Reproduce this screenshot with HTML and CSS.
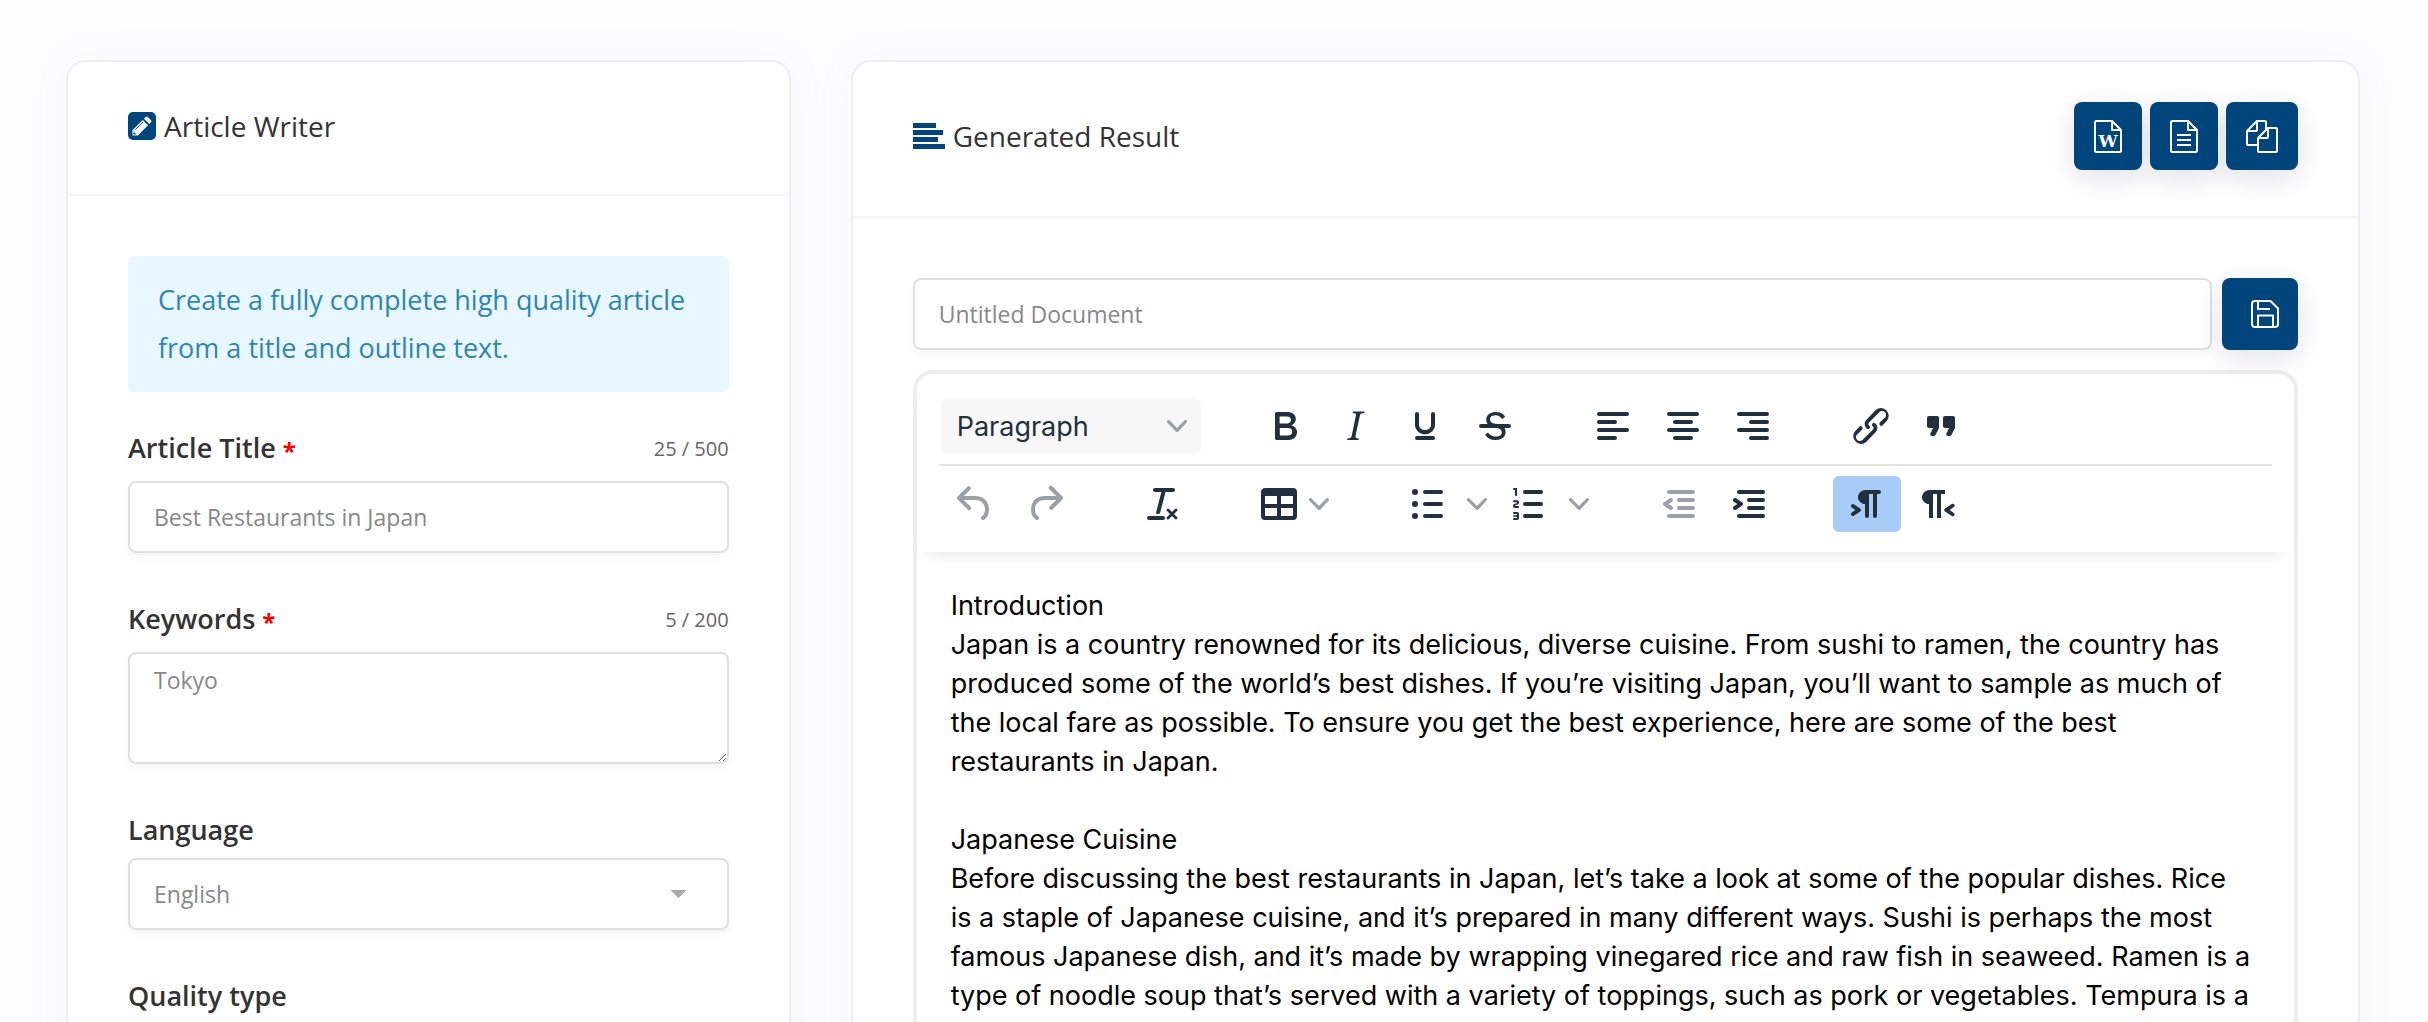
FILE: index.html
```html
<!DOCTYPE html>
<html lang="en">
<head>
    <meta charset="UTF-8">
    <meta name="viewport" content="width=device-width, initial-scale=1.0">
    <title>Article Writer</title>
    <link rel="stylesheet" href="styles.css">
</head>
<body>
<main class="page">
    <form class="card form-card">
        <header class="card-header">
            <svg class="icon-pen" viewBox="0 0 28 28" aria-hidden="true">
                <rect width="28" height="28" rx="5" fill="#00457b"/>
                <path d="M4.500 23.500V18.200L14.700 8l5.300 5.300L9.800 23.500z" fill="#fff"/>
                <path d="M16 6.700l1.600-1.600a1.600 1.600 0 0 1 2.300 0l3 3a1.600 1.600 0 0 1 0 2.300l-1.600 1.600z" fill="#fff"/>
                <path d="M7.500 17.500l7.500-7.500M6 20v2h2" fill="none" stroke="#00457b"/>
            </svg>
            <h1>Article Writer</h1>
        </header>
        <div class="card-body">
            <p class="notice">Create a fully complete high quality article from a title and outline text.</p>

            <div class="field">
                <div class="field-head">
                    <label for="title">Article Title <span class="required">*</span></label>
                    <span class="counter">25 / 500</span>
                </div>
                <input class="control" type="text" id="title" placeholder="Best Restaurants in Japan">
            </div>

            <div class="field">
                <div class="field-head">
                    <label for="keywords">Keywords <span class="required">*</span></label>
                    <span class="counter">5 / 200</span>
                </div>
                <textarea class="control" id="keywords" placeholder="Tokyo"></textarea>
            </div>

            <div class="field field-select">
                <label for="language">Language</label>
                <select class="control" id="language">
                    <option>English</option>
                </select>
            </div>

            <div class="field field-select">
                <label for="quality">Quality type</label>
                <select class="control" id="quality">
                    <option>Good</option>
                </select>
            </div>
        </div>
    </form>

    <section class="card result-card">
        <header class="card-header result-header">
            <svg class="icon-lines" viewBox="0 0 32 26" aria-hidden="true">
                <path d="M0 0h23v5H0zM0 7h30v5H0zM0 14h25v5H0zM0 21h32v5H0z" fill="#00457b"/>
            </svg>
            <h2>Generated Result</h2>
            <div class="actions">
                <button type="button" class="btn" aria-label="Export as Word">
                    <svg class="icon-file" viewBox="0 0 28 33" aria-hidden="true">
                        <path d="M1 2.500A1.500 1.500 0 0 1 2.500 1H18l9 9v20.500a1.500 1.500 0 0 1-1.500 1.500h-23A1.500 1.500 0 0 1 1 30.500zM18 1v9h9"/>
                        <text x="14" y="27" text-anchor="middle">W</text>
                    </svg>
                </button>
                <button type="button" class="btn" aria-label="Export as text">
                    <svg class="icon-file" viewBox="0 0 28 33" aria-hidden="true">
                        <path d="M1 2.500A1.500 1.500 0 0 1 2.500 1H18l9 9v20.500a1.500 1.500 0 0 1-1.500 1.500h-23A1.500 1.500 0 0 1 1 30.500zM18 1v9h9M7 15h14M7 20h14M7 25h14"/>
                    </svg>
                </button>
                <button type="button" class="btn btn-wide" aria-label="Copy">
                    <svg class="icon-file icon-copy" viewBox="0 0 32 33" aria-hidden="true">
                        <path d="M12 25H2a1 1 0 0 1-1-1V11L11 1h8a1 1 0 0 1 1 1v7M11 1v9a1 1 0 0 1-1 1H1"/>
                        <path d="M12 18L22 8h8a1 1 0 0 1 1 1v22a1 1 0 0 1-1 1H13a1 1 0 0 1-1-1zM22 8v9a1 1 0 0 1-1 1h-9"/>
                    </svg>
                </button>
            </div>
        </header>
        <div class="card-body">
            <div class="document-row">
                <input class="control" type="text" aria-label="Document name" placeholder="Untitled Document">
                <button type="button" class="btn btn-save" aria-label="Save">
                    <svg class="icon-save" viewBox="0 0 28 28" aria-hidden="true">
                        <path d="M4 1h15.500L27 8.500V24a3 3 0 0 1-3 3H4a3 3 0 0 1-3-3V4a3 3 0 0 1 3-3zM7 1v8h12M7 27V15.500h15V27"/>
                    </svg>
                </button>
            </div>

            <div class="editor">
                <div class="toolbar">
                    <div class="toolbar-row">
                        <button type="button" class="block-select">Paragraph
                            <svg class="chevron" viewBox="0 0 10 10"><path d="M8.700 2.200c.3-.3.8-.3 1 0 .4.4.4.9 0 1.200L5.700 7.800c-.3.3-.9.3-1.200 0L.2 3.400a.8.8 0 0 1 0-1.200c.3-.3.8-.3 1.100 0L5 6l3.700-3.800Z"/></svg>
                        </button>
                        <div class="group">
                            <button type="button" class="tool" aria-label="Bold">
                                <svg viewBox="0 0 24 24"><path d="M7.800 19c-.3 0-.5 0-.6-.2l-.2-.5V5.700c0-.2 0-.4.2-.5l.6-.2h5c1.500 0 2.700.3 3.500 1 .7.6 1.100 1.400 1.100 2.500a3 3 0 0 1-.6 1.900c-.4.6-1 1-1.600 1.200.4.1.9.3 1.300.6s.8.7 1 1.200c.4.4.5 1 .5 1.600 0 1.300-.4 2.300-1.300 3-.8.7-2.100 1-3.800 1H7.800Zm5-8.300c.6 0 1.200-.1 1.600-.5.4-.3.6-.7.6-1.300 0-1.100-.8-1.700-2.300-1.700H9.300v3.500h3.400Zm.5 6c.7 0 1.300-.1 1.700-.4.4-.4.6-.9.6-1.500s-.2-1-.7-1.400c-.4-.3-1-.4-2-.4H9.400v3.800h4Z"/></svg>
                            </button>
                            <button type="button" class="tool" aria-label="Italic">
                                <svg viewBox="0 0 24 24"><path d="m16.700 4.700-.1.900h-.3c-.6 0-1 0-1.400.3-.3.3-.4.6-.5 1.100l-2.100 9.800v.6c0 .5.4.8 1.400.8h.2l-.2.8H8l.2-.8h.2c1.100 0 1.800-.5 2-1.500l2-9.800.1-.5c0-.6-.4-.8-1.400-.8h-.3l.2-.9h5.700Z"/></svg>
                            </button>
                            <button type="button" class="tool" aria-label="Underline">
                                <svg viewBox="0 0 24 24"><path d="M16 5c.6 0 1 .4 1 1v5.500a4 4 0 0 1-.4 1.800l-1 1.400a5.300 5.300 0 0 1-5.500 1 5 5 0 0 1-1.600-1c-.5-.4-.8-.9-1.100-1.400a4 4 0 0 1-.4-1.800V6c0-.6.4-1 1-1s1 .4 1 1v5.500c0 .3 0 .6.2 1l.6.7a3.300 3.300 0 0 0 2.200.8 3.400 3.400 0 0 0 2.200-.8c.3-.2.4-.5.6-.8l.2-.9V6c0-.6.4-1 1-1ZM8 17h8c.6 0 1 .4 1 1s-.4 1-1 1H8a1 1 0 0 1 0-2Z"/></svg>
                            </button>
                            <button type="button" class="tool" aria-label="Strikethrough">
                                <svg viewBox="0 0 24 24"><path d="M15.600 8.500c-.5-.7-1-1.100-1.300-1.300-.6-.4-1.300-.6-2-.6-2.700 0-2.800 1.700-2.800 2.100 0 1.600 1.800 2 3.200 2.300 4.400.9 4.600 2.800 4.600 3.900 0 1.400-.7 4.100-5 4.100A6.200 6.200 0 0 1 7 16.400l1.500-1.100c.4.6 1.600 2 3.700 2 1.600 0 2.500-.4 3-1.200.4-.8.3-2-.8-2.600-.7-.4-1.600-.7-2.900-1-1-.2-3.900-.8-3.900-3.600C7.600 6 10.300 5 12.400 5c2.900 0 4.200 1.600 4.700 2.400l-1.500 1.100ZM5 11h14a1 1 0 0 1 0 2H5a1 1 0 0 1 0-2Z"/></svg>
                            </button>
                        </div>
                        <div class="group">
                            <button type="button" class="tool" aria-label="Align left">
                                <svg class="stroked" viewBox="0 0 24 24"><path d="M5 6h14M5 10h8M5 14h14M5 18h8"/></svg>
                            </button>
                            <button type="button" class="tool" aria-label="Align center">
                                <svg class="stroked" viewBox="0 0 24 24"><path d="M5 6h14M8 10h8M5 14h14M8 18h8"/></svg>
                            </button>
                            <button type="button" class="tool" aria-label="Align right">
                                <svg class="stroked" viewBox="0 0 24 24"><path d="M5 6h14M11 10h8M5 14h14M11 18h8"/></svg>
                            </button>
                        </div>
                        <div class="group">
                            <button type="button" class="tool" aria-label="Insert link">
                                <svg viewBox="0 0 24 24"><path d="M6.200 12.300a1 1 0 0 1 1.400 1.400l-2 2a2 2 0 1 0 2.600 2.800l4.800-4.800a1 1 0 0 0 0-1.400 1 1 0 1 1 1.400-1.300 2.900 2.900 0 0 1 0 4L9.600 20a3.900 3.900 0 0 1-5.500-5.500l2-2Zm11.600-.6a1 1 0 0 1-1.400-1.400l2-2a2 2 0 1 0-2.600-2.800L11 10.300a1 1 0 0 0 0 1.400A1 1 0 1 1 9.600 13a2.900 2.900 0 0 1 0-4L14.400 4a3.900 3.900 0 0 1 5.500 5.500l-2 2Z"/></svg>
                            </button>
                            <button type="button" class="tool" aria-label="Blockquote">
                                <svg viewBox="0 0 24 24"><path d="M7.500 17h.9c.4 0 .7-.2.9-.6L11 13V8c0-.6-.4-1-1-1H6a1 1 0 0 0-1 1v4c0 .6.4 1 1 1h2l-1.300 2.700a1 1 0 0 0 .8 1.300Zm8 0h.9c.4 0 .7-.2.9-.6L19 13V8c0-.6-.4-1-1-1h-4a1 1 0 0 0-1 1v4c0 .6.4 1 1 1h2l-1.300 2.700a1 1 0 0 0 .8 1.300Z"/></svg>
                            </button>
                        </div>
                    </div>
                    <div class="toolbar-row">
                        <div class="group">
                            <button type="button" class="tool" aria-label="Undo" disabled>
                                <svg viewBox="0 0 24 24"><path d="M6.400 8H12c3.700 0 6.200 2 6.800 5.100.6 2.700-.4 5.600-2.300 6.800a1 1 0 0 1-1-1.800c1.100-.6 1.800-2.700 1.400-4.600-.5-2.100-2.100-3.500-4.900-3.500H6.400l3.300 3.300a1 1 0 1 1-1.400 1.400l-5-5a1 1 0 0 1 0-1.400l5-5a1 1 0 0 1 1.400 1.400L6.400 8Z"/></svg>
                            </button>
                            <button type="button" class="tool" aria-label="Redo" disabled>
                                <svg viewBox="0 0 24 24"><path d="M17.600 10H12c-2.800 0-4.400 1.400-4.900 3.500-.4 2 .3 4 1.400 4.600a1 1 0 1 1-1 1.800c-2-1.200-2.900-4.100-2.300-6.800.6-3 3-5.100 6.800-5.100h5.600l-3.300-3.300a1 1 0 1 1 1.400-1.400l5 5a1 1 0 0 1 0 1.400l-5 5a1 1 0 0 1-1.400-1.400l3.300-3.300Z"/></svg>
                            </button>
                        </div>
                        <div class="group">
                            <button type="button" class="tool" aria-label="Clear formatting">
                                <svg viewBox="0 0 24 24"><path d="M13.200 6a1 1 0 0 1 0 .2l-2.600 10a1 1 0 0 1-1 .8h-.2a.8.8 0 0 1-.8-1l2.600-10H8a1 1 0 1 1 0-2h9a1 1 0 0 1 0 2h-3.800ZM5 18h7a1 1 0 0 1 0 2H5a1 1 0 0 1 0-2Zm13 1.500L16.500 18 15 19.500a.7.7 0 0 1-1-1l1.500-1.500-1.500-1.500a.7.7 0 0 1 1-1l1.500 1.500 1.500-1.500a.7.7 0 0 1 1 1L17.500 17l1.500 1.500a.7.7 0 0 1-1 1Z"/></svg>
                            </button>
                        </div>
                        <div class="group">
                            <button type="button" class="tool tool-menu" aria-label="Table">
                                <svg viewBox="0 0 24 24"><path d="M19 4a2 2 0 0 1 2 2v12a2 2 0 0 1-2 2H5a2 2 0 0 1-2-2V6c0-1.100.9-2 2-2h14ZM5 14v4h6v-4H5Zm14 0h-6v4h6v-4Zm0-6h-6v4h6V8ZM5 12h6V8H5v4Z"/></svg>
                                <svg class="chevron" viewBox="0 0 10 10"><path d="M8.700 2.200c.3-.3.8-.3 1 0 .4.4.4.9 0 1.200L5.700 7.800c-.3.3-.9.3-1.200 0L.2 3.400a.8.8 0 0 1 0-1.200c.3-.3.8-.3 1.100 0L5 6l3.700-3.800Z"/></svg>
                            </button>
                        </div>
                        <div class="group">
                            <div class="split">
                                <button type="button" class="tool" aria-label="Bullet list">
                                    <svg class="stroked" viewBox="0 0 24 24"><path d="M11 6h8M11 12h8M11 18h8"/><path class="dots" d="M6 6h.01M6 12h.01M6 18h.01"/></svg>
                                </button>
                                <button type="button" class="tool-arrow" aria-label="Bullet list styles">
                                    <svg class="chevron" viewBox="0 0 10 10"><path d="M8.700 2.200c.3-.3.8-.3 1 0 .4.4.4.9 0 1.200L5.700 7.800c-.3.3-.9.3-1.200 0L.2 3.400a.8.8 0 0 1 0-1.200c.3-.3.8-.3 1.100 0L5 6l3.700-3.800Z"/></svg>
                                </button>
                            </div>
                            <div class="split">
                                <button type="button" class="tool" aria-label="Numbered list">
                                    <svg viewBox="0 0 24 24"><path d="M10 17h8c.6 0 1 .4 1 1s-.4 1-1 1h-8a1 1 0 0 1 0-2Zm0-6h8c.6 0 1 .4 1 1s-.4 1-1 1h-8a1 1 0 0 1 0-2Zm0-6h8c.6 0 1 .4 1 1s-.4 1-1 1h-8a1 1 0 1 1 0-2ZM6 4v3.500c0 .3-.2.5-.5.5a.5.5 0 0 1-.5-.5V5h-.5a.5.5 0 0 1 0-1H6Zm-1 8.800.2.2h1.300c.3 0 .5.2.5.5s-.2.5-.5.5H4.900a1 1 0 0 1-.9-1V13c0-.4.3-.8.6-1l1.200-.4.2-.3a.2.2 0 0 0-.2-.2H4.500a.5.5 0 0 1-.5-.5c0-.3.2-.5.5-.5h1.600c.5 0 .9.4.9 1v.1c0 .4-.3.8-.6 1l-1.200.4-.2.3ZM7 17v2c0 .6-.4 1-1 1H4.500a.5.5 0 0 1 0-1h1.200c.2 0 .3-.1.3-.3 0-.2-.1-.3-.3-.3H4.400a.4.4 0 1 1 0-.8h1.300c.2 0 .3-.1.3-.3 0-.2-.1-.3-.3-.3H4.500a.5.5 0 1 1 0-1H6c.6 0 1 .4 1 1Z"/></svg>
                                </button>
                                <button type="button" class="tool-arrow" aria-label="Numbered list styles">
                                    <svg class="chevron" viewBox="0 0 10 10"><path d="M8.700 2.200c.3-.3.8-.3 1 0 .4.4.4.9 0 1.200L5.700 7.800c-.3.3-.9.3-1.200 0L.2 3.400a.8.8 0 0 1 0-1.200c.3-.3.8-.3 1.100 0L5 6l3.700-3.800Z"/></svg>
                                </button>
                            </div>
                        </div>
                        <div class="group">
                            <button type="button" class="tool" aria-label="Decrease indent" disabled>
                                <svg class="stroked" viewBox="0 0 24 24"><path d="M7 6h12M12 10h7M12 14h7M7 18h12M8 10l-3 2 3 2"/></svg>
                            </button>
                            <button type="button" class="tool" aria-label="Increase indent">
                                <svg class="stroked" viewBox="0 0 24 24"><path d="M7 6h12M12 10h7M12 14h7M7 18h12M5 10l3 2-3 2"/></svg>
                            </button>
                        </div>
                        <div class="group">
                            <button type="button" class="tool active" aria-label="Left to right">
                                <svg viewBox="0 0 24 24"><path d="M11 5h7a1 1 0 0 1 0 2h-1v11a1 1 0 0 1-2 0V7h-2v11a1 1 0 0 1-2 0v-6c-.5 0-1 0-1.400-.3A3.400 3.400 0 0 1 7.800 10a3.300 3.300 0 0 1 0-2.800 3.400 3.400 0 0 1 1.800-1.800L11 5ZM4.400 16.200 6.200 15l-1.800-1.200a1 1 0 0 1 1.200-1.600l3 2a1 1 0 0 1 0 1.600l-3 2a1 1 0 1 1-1.200-1.600Z"/></svg>
                            </button>
                            <button type="button" class="tool" aria-label="Right to left">
                                <svg viewBox="0 0 24 24"><path d="M8 5h8v2h-2v12h-2V7h-2v12H8v-7c-.5 0-1 0-1.400-.3A3.400 3.400 0 0 1 4.800 10a3.300 3.300 0 0 1 0-2.800 3.400 3.400 0 0 1 1.800-1.800L8 5Zm12 11.200a1 1 0 1 1-1 1.600l-3-2a1 1 0 0 1 0-1.600l3-2a1 1 0 1 1 1 1.600L18.400 15l1.600 1.200Z"/></svg>
                            </button>
                        </div>
                    </div>
                </div>
                <article class="content">
                    <p>Introduction<br>
                    Japan is a country renowned for its delicious, diverse cuisine. From sushi to ramen, the country has produced some of the world’s best dishes. If you’re visiting Japan, you’ll want to sample as much of the local fare as possible. To ensure you get the best experience, here are some of the best restaurants in Japan.</p>
                    <p>Japanese Cuisine<br>
                    Before discussing the best restaurants in Japan, let’s take a look at some of the popular dishes. Rice is a staple of Japanese cuisine, and it’s prepared in many different ways. Sushi is perhaps the most famous Japanese dish, and it’s made by wrapping vinegared rice and raw fish in seaweed. Ramen is a type of noodle soup that’s served with a variety of toppings, such as pork or vegetables. Tempura is a</p>
                </article>
            </div>
        </div>
    </section>
</main>
</body>
</html>
```

FILE: styles.css
```css
* {
    box-sizing: border-box;
}

body {
    height: 100vh;
    margin: 0;
    overflow: hidden;
    background-color: #fdfdff;
    color: #333;
    font-family: 'Open Sans', sans-serif;
    font-size: 27px;
}

button,
input,
select,
textarea {
    font: inherit;
}

.page {
    display: grid;
    grid-template-columns: repeat(12, minmax(0, 1fr));
    gap: 60px;
    padding: 60px 68px 60px 66px;
}

.card {
    background-color: #fff;
    border: 2px solid #eee;
    border-radius: 20px;
    box-shadow: 0 0 40px rgba(120, 150, 240, 0.06);
}

.form-card {
    grid-column: span 4;
}

.result-card {
    grid-column: span 8;
}

.card-header {
    display: flex;
    align-items: center;
    gap: 8px;
    min-height: 134px;
    padding: 0 60px 4px;
    border-bottom: 2px solid #f0f3ff;
}

.result-header {
    min-height: 156px;
    padding-bottom: 6px;
}

.card-header h1,
.card-header h2 {
    margin: 0;
    font-size: 28px;
    font-weight: 500;
}

.icon-pen {
    width: 28px;
    height: 28px;
}

.icon-lines {
    width: 32px;
    height: 26px;
}

.actions {
    display: flex;
    gap: 8px;
    margin-left: auto;
}

.card-body {
    padding: 60px;
}

.notice {
    margin: 0 0 34px;
    padding: 20px 30px;
    border-radius: 6px;
    background-color: #e8f7ff;
    color: #2f86b0;
    line-height: 48px;
}

.field {
    margin-bottom: 44px;
}

.field-head {
    display: flex;
    justify-content: space-between;
    align-items: center;
    margin-bottom: 11px;
}

.field label {
    font-weight: 600;
    line-height: 44px;
}

.required {
    color: #f00;
    font-size: 24px;
    font-weight: 700;
    line-height: 24px;
    vertical-align: middle;
}

.counter {
    color: #666;
    font-size: 20px;
}

.field-select label {
    display: block;
    margin-bottom: 6px;
}

.control {
    display: block;
    width: 100%;
    height: 72px;
    padding: 0 24px;
    border: 2px solid #e0e0e0;
    border-radius: 8px;
    background-color: #fff;
    box-shadow: 0 4px 10px rgba(0, 0, 0, 0.04);
    color: #888;
    font-size: 23px;
}

.control::placeholder {
    color: #888;
}

textarea.control {
    height: 112px;
    padding: 10px 24px;
}

select.control {
    appearance: none;
    background-image: linear-gradient(to bottom right, #aaa 50%, transparent 50%),
                      linear-gradient(to bottom left, #aaa 50%, transparent 50%);
    background-position: right 40px center, right 48px center;
    background-repeat: no-repeat;
    background-size: 8px 8px;
}

.btn {
    display: flex;
    align-items: center;
    justify-content: center;
    width: 68px;
    height: 68px;
    padding: 0;
    border: none;
    border-radius: 8px;
    background-color: #00457b;
    box-shadow: 0 8px 30px rgba(0, 20, 80, 0.12);
    cursor: pointer;
}

.btn svg {
    fill: none;
    stroke: #fff;
    stroke-width: 2;
    stroke-linejoin: round;
}

.btn text {
    fill: #fff;
    stroke: none;
    font: bold 17px 'DejaVu Serif', serif;
}

.btn-wide {
    width: 72px;
}

.icon-file {
    width: 28px;
    height: 33px;
}

.icon-copy {
    width: 32px;
}

.document-row {
    display: flex;
    gap: 10px;
    margin-bottom: 20px;
}

.document-row .control {
    flex: 1;
}

.btn-save {
    width: 76px;
    height: 72px;
    padding-left: 9px;
}

.icon-save {
    width: 28px;
    height: 28px;
}

.editor {
    border: 4px solid #eee;
    border-radius: 20px;
    color: #222f3e;
    font-family: Inter, sans-serif;
}

.toolbar {
    padding: 18px 22px 14px;
    border-radius: 16px 16px 0 0;
    box-shadow: 0 12px 16px -10px rgba(0, 0, 0, 0.1);
}

.toolbar-row {
    display: flex;
    gap: 50px;
    padding: 6px 2px 10px;
}

.toolbar-row + .toolbar-row {
    border-top: 2px solid #e3e3e3;
    padding: 10px 2px 6px;
}

.group,
.split {
    display: flex;
    gap: 2px;
}

.split {
    gap: 0;
}

.block-select {
    display: flex;
    align-items: center;
    justify-content: space-between;
    width: 260px;
    height: 56px;
    padding: 0 14px 0 16px;
    border: none;
    border-radius: 6px;
    background-color: #f7f7f7;
    color: #222f3e;
}

.tool,
.tool-arrow {
    display: flex;
    align-items: center;
    justify-content: center;
    width: 68px;
    height: 56px;
    padding: 0;
    border: none;
    border-radius: 6px;
    background: none;
}

.tool svg {
    width: 48px;
    height: 48px;
    fill: #222f3e;
}

.tool .stroked {
    fill: none;
    stroke: #222f3e;
    stroke-width: 2;
    stroke-linecap: round;
    stroke-linejoin: round;
}

.tool .dots {
    stroke-width: 3;
}

.tool:disabled svg {
    opacity: 0.45;
}

.tool.active {
    background-color: #a6ccf7;
}

.tool-arrow {
    width: 32px;
}

.tool-menu {
    justify-content: flex-start;
    width: 96px;
    gap: 6px;
    padding-left: 8px;
}

svg.chevron,
.tool svg.chevron {
    width: 20px;
    height: 20px;
    fill: #9aa0a8;
}

.content {
    padding: 34px 42px 0 34px;
    color: #000;
    font-size: 27px;
    line-height: 39px;
}

.content p {
    margin: 0 0 39px;
}
```
